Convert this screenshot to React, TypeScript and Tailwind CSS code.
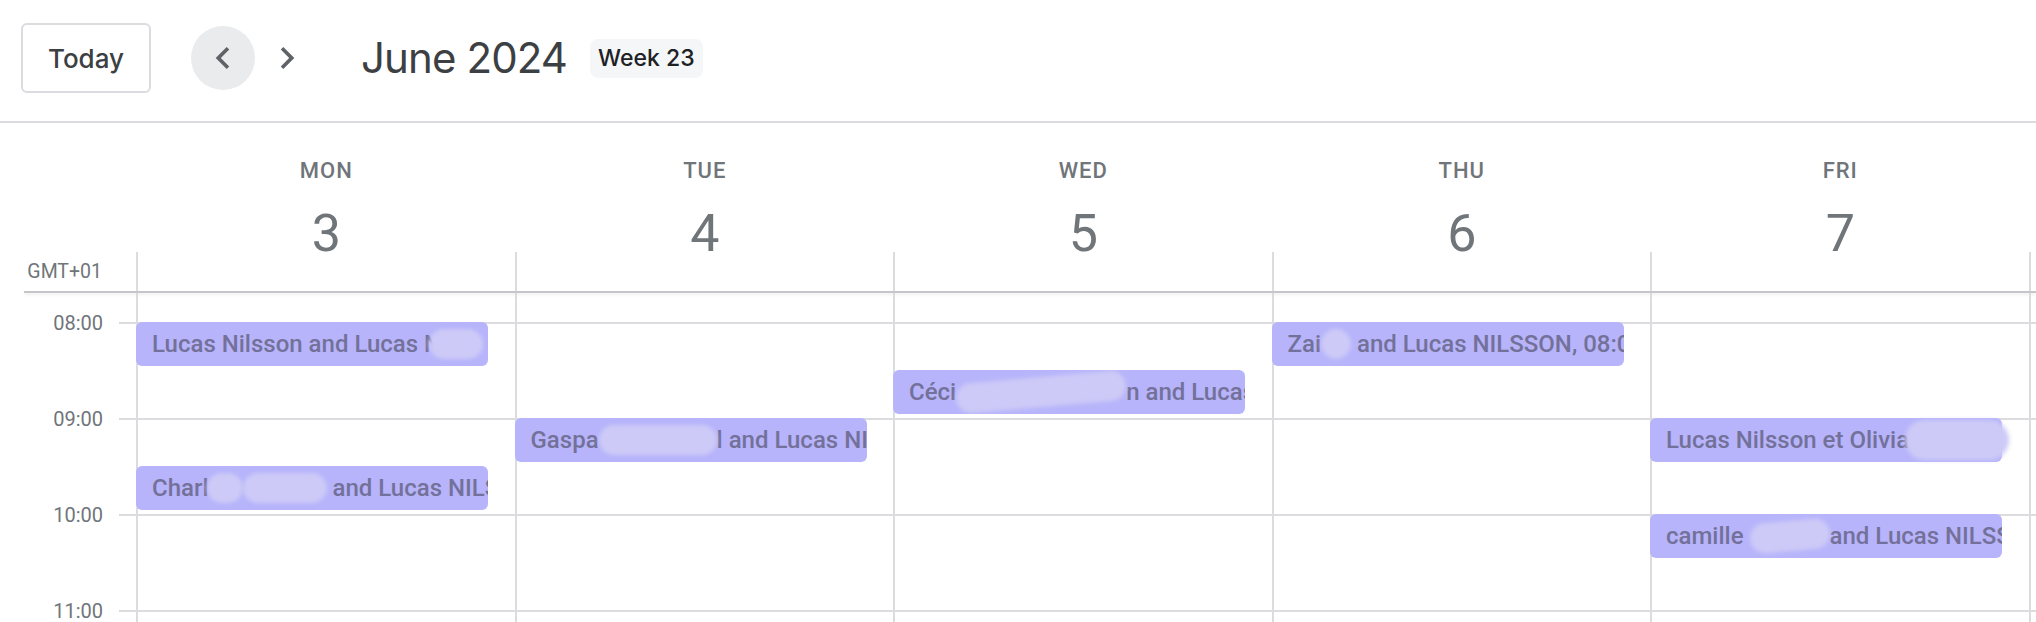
import React from "react";

type Part = string | { w: number; ml?: number; tilt?: boolean; h?: number };

interface CalEvent {
  start: number; // hours after 08:00
  parts: Part[];
  spill?: boolean;
}

const hours = ["08:00", "09:00", "10:00", "11:00"];

const days: { name: string; date: number; events: CalEvent[] }[] = [
  {
    name: "MON",
    date: 3,
    events: [
      { start: 0, parts: ["Lucas Nilsson and Lucas N", { w: 54, ml: -12 }] },
      { start: 1.5, parts: ["Charl", { w: 36, ml: -2 }, { w: 84 }, " and Lucas NILSSON"] },
    ],
  },
  {
    name: "TUE",
    date: 4,
    events: [{ start: 1, parts: ["Gaspa", { w: 118 }, "l and Lucas NILSSON"] }],
  },
  {
    name: "WED",
    date: 5,
    events: [{ start: 0.5, parts: ["Céci", { w: 170, tilt: true }, "n and Lucas NILSSON"] }],
  },
  {
    name: "THU",
    date: 6,
    events: [{ start: 0, parts: ["Zai", { w: 30 }, " and Lucas NILSSON, 08:00 - 08:30"] }],
  },
  {
    name: "FRI",
    date: 7,
    events: [
      { start: 1, parts: ["Lucas Nilsson et Olivia", { w: 104, ml: -4, h: 40 }], spill: true },
      { start: 2, parts: ["camille ", { w: 80, tilt: true }, "and Lucas NILSSON"] },
    ],
  },
];

const Blob = ({ w, ml = 0, tilt, h = 30 }: { w: number; ml?: number; tilt?: boolean; h?: number }) => (
  <span
    className={`inline-block shrink-0 rounded-full bg-[#cdcaf7] blur-[2px] ${tilt ? "-rotate-[5deg]" : ""}`}
    style={{ width: w, height: h, marginLeft: ml }}
  />
);

const EventChip = ({ ev }: { ev: CalEvent }) => (
  <div
    className={`absolute -left-[2px] h-[44px] w-[352px] rounded-[6px] bg-[#b7b4fb] pl-[16px] flex items-center whitespace-pre text-[24px] font-medium text-[#737199] ${ev.spill ? "overflow-visible" : "overflow-hidden"}`}
    style={{ top: 29 + ev.start * 96 }}
  >
    {ev.parts.map((p, i) =>
      typeof p === "string" ? (
        <span key={i} className="shrink-0">
          {p}
        </span>
      ) : (
        <Blob key={i} w={p.w} ml={p.ml} tilt={p.tilt} h={p.h} />
      )
    )}
  </div>
);

const HourRows = () => (
  <>
    {hours.map((h) => (
      <div key={h} className="h-[96px] border-t-2 border-[#dcdce0]" />
    ))}
  </>
);

export default function App() {
  return (
    <div className="h-[622px] w-full overflow-hidden bg-white font-['Roboto',sans-serif]">
      {/* Toolbar */}
      <div className="h-[123px] border-b-2 border-[#dcdce0] pl-[21px] pt-[23px] font-['Inter',sans-serif]">
        <div className="flex h-[70px] items-center">
          <button className="flex h-[70px] w-[130px] items-center justify-center rounded-[6px] border-2 border-[#dadce0] text-[26px] font-medium text-[#3c4043]">
            Today
          </button>
          <button className="ml-[40px] flex h-[64px] w-[64px] items-center justify-center rounded-full bg-[#eaebec]">
            <svg viewBox="0 0 24 24" className="h-[44px] w-[44px]" fill="#5f6368">
              <path d="M15.41 7.41L14 6l-6 6 6 6 1.41-1.41L10.83 12z" />
            </svg>
          </button>
          <button className="flex h-[64px] w-[64px] items-center justify-center rounded-full">
            <svg viewBox="0 0 24 24" className="h-[44px] w-[44px]" fill="#5f6368">
              <path d="M10 6L8.59 7.41 13.17 12l-4.58 4.59L10 18l6-6z" />
            </svg>
          </button>
          <span className="ml-[42px] text-[42px] leading-[52px] tracking-[-0.9px] text-[#3c4043]">June 2024</span>
          <span className="ml-[23px] flex h-[39px] items-center rounded-[8px] bg-[#f4f6f8] px-[8px] text-[23px] font-medium text-[#202124]">
            Week 23
          </span>
        </div>
      </div>

      {/* Day names */}
      <div className="flex h-[129px]">
        <div className="w-[136px] shrink-0" />
        {days.map((d) => (
          <div key={d.name} className="flex w-[378.5px] shrink-0 flex-col items-center pl-[2px] pt-[37px]">
            <span className="text-[22px] font-medium leading-[22px] tracking-[1px] text-[#70757a]">{d.name}</span>
            <span className="mt-[26px] text-[52px] leading-[52px] text-[#70757a]">{d.date}</span>
          </div>
        ))}
      </div>

      {/* All-day row */}
      <div className="flex h-[39px]">
        <div className="flex w-[136px] shrink-0 items-center justify-end pr-[34px] text-[19.5px] text-[#70757a]">
          GMT+01
        </div>
        {days.map((d) => (
          <div key={d.name} className="w-[378.5px] shrink-0 border-l-2 border-[#dcdce0]" />
        ))}
        <div className="flex-1 border-l-2 border-[#dcdce0]" />
      </div>
      <div className="ml-[24px] h-[2px] bg-[#c6c6ca] shadow-[0_2px_3px_rgba(0,0,0,0.07)]" />

      {/* Time grid */}
      <div className="flex">
        <div className="w-[136px] shrink-0 pt-[29px]">
          {hours.map((h) => (
            <div key={h} className="flex h-[96px]">
              <div className="-mt-[11px] h-[24px] w-[119px] pr-[16px] text-right text-[20px] leading-[24px] text-[#70757a]">
                {h}
              </div>
              <div className="flex-1 border-t-2 border-[#dcdce0]" />
            </div>
          ))}
        </div>
        {days.map((d) => (
          <div key={d.name} className="relative w-[378.5px] shrink-0 border-l-2 border-[#dcdce0] pt-[29px]">
            <HourRows />
            {d.events.map((ev, i) => (
              <EventChip key={i} ev={ev} />
            ))}
          </div>
        ))}
        <div className="flex-1 border-l-2 border-[#dcdce0] pt-[29px]">
          <HourRows />
        </div>
      </div>
    </div>
  );
}
